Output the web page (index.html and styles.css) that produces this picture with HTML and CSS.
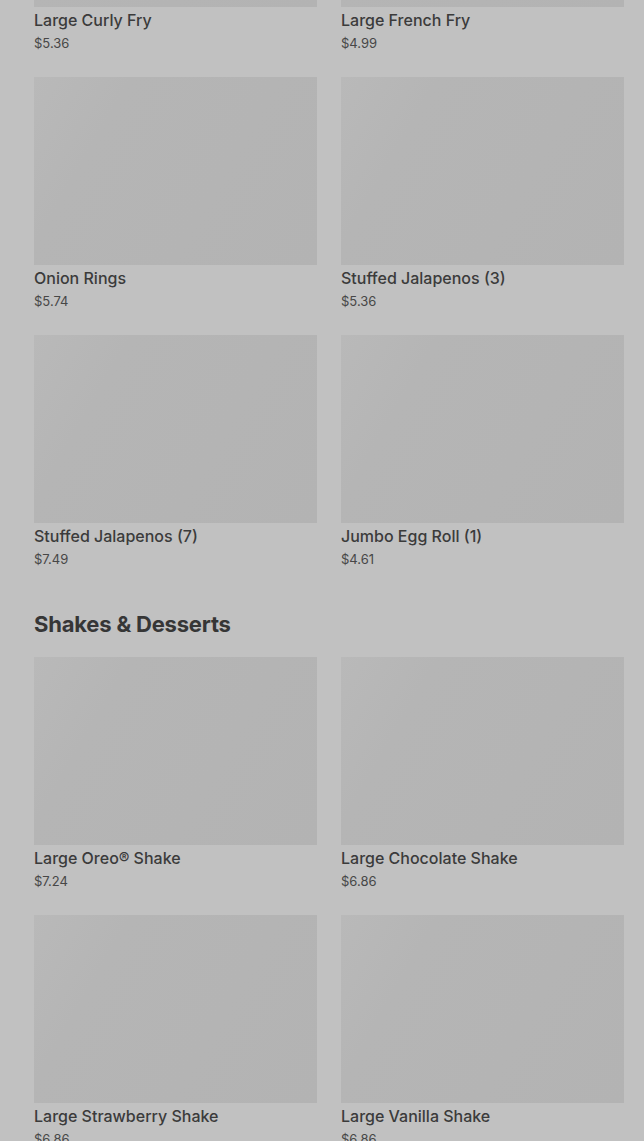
FILE: index.html
```html
<!DOCTYPE html>
<html lang="en">
<head>
    <meta charset="UTF-8">
    <meta name="viewport" content="width=device-width, initial-scale=1.0">
    <title>Menu</title>
    <link rel="stylesheet" href="styles.css">
</head>
<body>
    <div class="menu">
        <!-- Sides -->
        <div class="section">
            <div class="grid">
                <div class="item">
                    <div class="thumb"></div>
                    <div class="name">Large Curly Fry</div>
                    <div class="price">$5.36</div>
                </div>
                <div class="item">
                    <div class="thumb"></div>
                    <div class="name">Large French Fry</div>
                    <div class="price">$4.99</div>
                </div>
                <div class="item">
                    <div class="thumb"></div>
                    <div class="name">Onion Rings</div>
                    <div class="price">$5.74</div>
                </div>
                <div class="item">
                    <div class="thumb"></div>
                    <div class="name">Stuffed Jalapenos (3)</div>
                    <div class="price">$5.36</div>
                </div>
                <div class="item">
                    <div class="thumb"></div>
                    <div class="name">Stuffed Jalapenos (7)</div>
                    <div class="price">$7.49</div>
                </div>
                <div class="item">
                    <div class="thumb"></div>
                    <div class="name">Jumbo Egg Roll (1)</div>
                    <div class="price">$4.61</div>
                </div>
            </div>
        </div>

        <!-- Shakes -->
        <div class="section">
            <h2>Shakes &amp; Desserts</h2>
            <div class="grid">
                <div class="item">
                    <div class="thumb"></div>
                    <div class="name">Large Oreo® Shake</div>
                    <div class="price">$7.24</div>
                </div>
                <div class="item">
                    <div class="thumb"></div>
                    <div class="name">Large Chocolate Shake</div>
                    <div class="price">$6.86</div>
                </div>
                <div class="item">
                    <div class="thumb"></div>
                    <div class="name">Large Strawberry Shake</div>
                    <div class="price">$6.86</div>
                </div>
                <div class="item">
                    <div class="thumb"></div>
                    <div class="name">Large Vanilla Shake</div>
                    <div class="price">$6.86</div>
                </div>
            </div>
        </div>
    </div>
</body>
</html>
```

FILE: styles.css
```css
body {
    margin: 0;
    background: #c1c1c1;
    font-family: Inter, "Noto Sans", sans-serif;
    color: #383838;
    overflow: hidden;
}

.menu {
    margin-top: -181px;
    padding: 0 20px 0 34px;
}

.section {
    margin-bottom: 42px;
}

.section h2 {
    margin: 0 0 19px 0;
    font-size: 22px;
    line-height: 28px;
    font-weight: 700;
    letter-spacing: -0.2px;
    color: #363636;
}

.grid {
    display: grid;
    grid-template-columns: 1fr 1fr;
    column-gap: 24px;
    row-gap: 25px;
}

.thumb {
    height: 188px;
    background: linear-gradient(120deg, #b9b9b9 0%, #b5b5b5 25%, #b3b3b3 100%);
}

.name {
    margin-top: 2px;
    font-size: 16px;
    line-height: 22px;
    font-weight: 500;
    color: #3b3b3b;
}

.price {
    margin-top: 3px;
    font-size: 13px;
    line-height: 18px;
    color: #474747;
}
```
